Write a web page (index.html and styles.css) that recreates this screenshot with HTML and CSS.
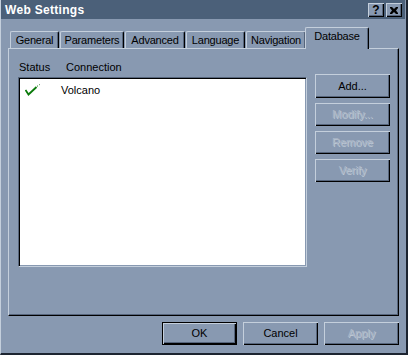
FILE: index.html
```html
<!DOCTYPE html>
<html>
<head>
<meta charset="utf-8">
<link rel="stylesheet" href="styles.css">
</head>
<body>
<div class="window">
  <div class="titlebar">
    <span class="title">Web Settings</span>
    <div class="tbtns">
      <span class="tbtn q">?</span>
      <span class="tbtn">
        <svg width="8" height="7" viewBox="0 0 8 7"><path d="M0 0h2l2 2 2-2h2v1l-2 2.5 2 2.5v1h-2l-2-2-2 2h-2v-1l2-2.5-2-2.5z" fill="#000"/></svg>
      </span>
    </div>
  </div>
  <div class="body">
    <div class="tabs">
      <div class="tab w-gen">General</div>
      <div class="tab w-par">Parameters</div>
      <div class="tab w-adv">Advanced</div>
      <div class="tab w-lan">Language</div>
      <div class="tab w-nav">Navigation</div>
      <div class="tab sel w-db">Database</div>
    </div>
    <div class="panel">
      <div class="left">
        <div class="heads"><span class="h1">Status</span><span>Connection</span></div>
        <div class="list">
          <div class="row">
            <span class="chk"><svg width="15" height="13" viewBox="0 0 15 13"><path d="M0.5 6 L3.5 10.5 L11.5 3" fill="none" stroke="#0a7a0a" stroke-width="1.8"/><path d="M12 2.5 L13 1.6 M14 1 L14.8 0.5" stroke="#2a8a2a" stroke-width="1"/></svg></span>
            <span>Volcano</span>
          </div>
        </div>
      </div>
      <div class="side">
        <div class="btn">Add...</div>
        <div class="btn dis">Modify...</div>
        <div class="btn dis">Remove</div>
        <div class="btn dis">Verify</div>
      </div>
    </div>
    <div class="footer">
      <div class="btn def">OK</div>
      <div class="btn">Cancel</div>
      <div class="btn dis">Apply</div>
    </div>
  </div>
</div>
</body>
</html>
```
FILE: styles.css
```css
html, body {
  margin: 0;
  padding: 0;
  background: #8899b1;
}
.window {
  width: 408px;
  height: 355px;
  box-sizing: border-box;
  background: #8899b1;
  border-left: 1px solid #c4cfdc;
  border-bottom: 2px solid #1c2430;
  border-right: 2px solid #1c2430;
  font-family: "Liberation Sans", Arial, sans-serif;
  font-size: 11px;
  color: #000;
}
.titlebar {
  height: 19px;
  background: #4b6079;
  display: flex;
  align-items: center;
  justify-content: space-between;
  padding: 0 3px 0 4px;
  margin-right: 1px;
}
.title {
  color: #fff;
  font-family: "Liberation Sans", Arial, sans-serif;
  font-weight: bold;
  font-size: 12px;
  letter-spacing: 0.3px;
}
.tbtns {
  display: flex;
  gap: 2px;
  padding-top: 1px;
}
.tbtn {
  width: 16px;
  height: 14px;
  box-sizing: border-box;
  background: #8899b1;
  box-shadow: inset 1px 1px 0 #c4cfdc, inset -1px -1px 0 #000, inset -2px -2px 0 #56657c;
  display: flex;
  align-items: center;
  justify-content: center;
  font-weight: bold;
  font-size: 12px;
  line-height: 12px;
}
.q {
  font-family: "Liberation Sans", sans-serif;
  padding-bottom: 1px;
}
.body {
  padding: 8px 0 0 7px;
}
.tabs {
  display: flex;
  align-items: flex-end;
  height: 21px;
  padding-left: 2px;
  position: relative;
  z-index: 2;
}
.tab {
  height: 17px;
  box-sizing: border-box;
  margin-right: 1px;
  padding-top: 2px;
  text-align: center;
  white-space: nowrap;
  border-top: 1px solid #c4cfdc;
  border-left: 1px solid #c4cfdc;
  border-right: 1px solid #000;
  box-shadow: inset -1px 0 0 #56657c;
  border-radius: 2px 2px 0 0;
  background: #8899b1;
  line-height: 13px;
  letter-spacing: -0.2px;
}
.w-gen { width: 49px; }
.w-par { width: 64px; }
.w-adv { width: 60px; }
.w-lan { width: 59px; }
.w-nav { width: 60px; }
.w-db { width: 64px; }
.tab.sel {
  height: 22px;
  margin: 0 0 -1px -2px;
  padding-top: 2px;
}
.panel {
  width: 391px;
  height: 268px;
  box-sizing: border-box;
  border-top: 1px solid #c4cfdc;
  border-left: 1px solid #c4cfdc;
  border-right: 1px solid #000;
  border-bottom: 1px solid #000;
  box-shadow: inset -1px -1px 0 #56657c;
  display: flex;
  padding: 12px 0 0 9px;
  gap: 8px;
}
.left {
  display: flex;
  flex-direction: column;
}
.heads {
  display: flex;
  height: 13px;
  line-height: 13px;
  margin-bottom: 3px;
  padding-left: 1px;
}
.h1 {
  width: 47px;
}
.list {
  width: 289px;
  height: 190px;
  box-sizing: border-box;
  background: #fff;
  border-top: 1px solid #56657c;
  border-left: 1px solid #56657c;
  border-right: 1px solid #c4cfdc;
  border-bottom: 1px solid #c4cfdc;
  box-shadow: inset 1px 1px 0 #000, inset -1px -1px 0 #8899b1;
  padding: 5px 0 0 6px;
}
.row {
  display: flex;
  align-items: center;
  height: 14px;
  line-height: 14px;
}
.chk {
  width: 36px;
  height: 14px;
  display: flex;
  align-items: center;
}
.side {
  display: flex;
  flex-direction: column;
  gap: 5px;
  padding-top: 13px;
}
.btn {
  width: 75px;
  height: 23px;
  box-sizing: border-box;
  background: #8899b1;
  box-shadow: inset 1px 1px 0 #c4cfdc, inset -1px -1px 0 #000, inset -2px -2px 0 #56657c;
  display: flex;
  align-items: center;
  justify-content: center;
  line-height: 13px;
}
.btn.dis {
  color: #a9b5c6;
  text-shadow: 1px 1px 0 #bcc7d4;
}
.btn.def {
  border: 1px solid #000;
  box-shadow: inset 1px 1px 0 #c4cfdc, inset -1px -1px 0 #000, inset -2px -2px 0 #56657c;
}
.side .btn:first-child {
  height: 24px;
}
.footer {
  display: flex;
  justify-content: flex-end;
  gap: 6px;
  width: 391px;
  padding-top: 6px;
}
```
